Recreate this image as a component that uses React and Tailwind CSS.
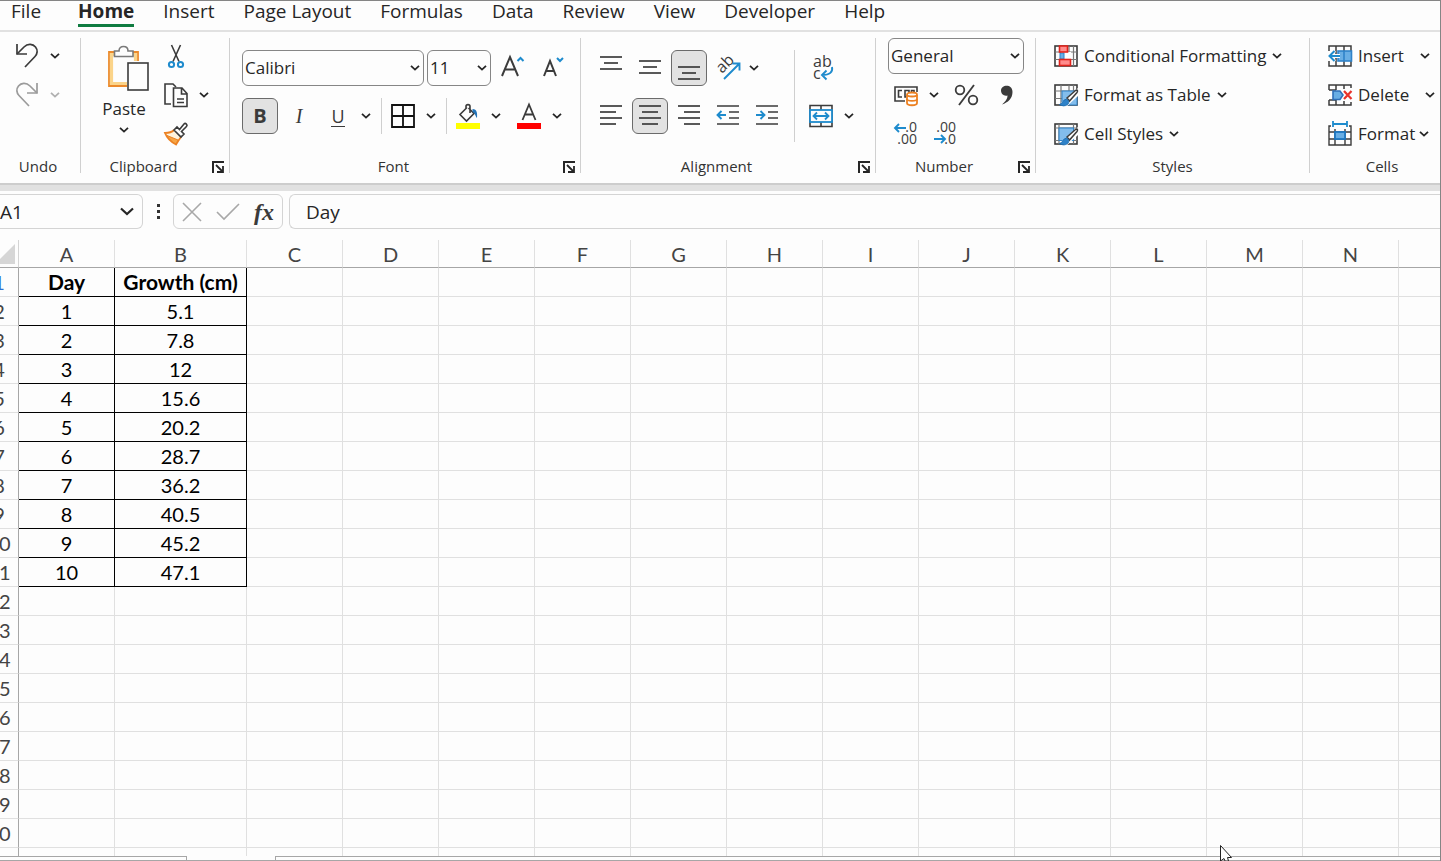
import React, { useState } from 'react';

const TABS = ['File', 'Home', 'Insert', 'Page Layout', 'Formulas', 'Data', 'Review', 'View', 'Developer', 'Help'];
const COLUMNS = ['A', 'B', 'C', 'D', 'E', 'F', 'G', 'H', 'I', 'J', 'K', 'L', 'M', 'N'];
const ROWS = Array.from({ length: 20 }, (_, i) => i + 1);

const DATA = [
    ['Day', 'Growth (cm)'],
    ['1', '5.1'],
    ['2', '7.8'],
    ['3', '12'],
    ['4', '15.6'],
    ['5', '20.2'],
    ['6', '28.7'],
    ['7', '36.2'],
    ['8', '40.5'],
    ['9', '45.2'],
    ['10', '47.1'],
];

const Icon = ({ w = 24, h = 24, children, className = '' }) => (
    <svg width={w} height={h} viewBox={`0 0 ${w} ${h}`} fill="none" stroke="#3b3b3b" strokeWidth="1.6" className={`shrink-0 overflow-visible ${className}`} aria-hidden="true">
        {children}
    </svg>
);

const Chevron = ({ className = 'text-[#262626]' }) => (
    <svg width="10" height="6" viewBox="0 0 10 6" fill="none" stroke="currentColor" strokeWidth="1.8" className={`shrink-0 ${className}`} aria-hidden="true">
        <path d="M1 .8 L5 4.6 L9 .8" />
    </svg>
);

const MenuButton = ({ label, className = 'w-5', tone }) => (
    <button type="button" aria-label={label} className={`flex h-9 shrink-0 items-center justify-center ${className}`}>
        <Chevron className={tone} />
    </button>
);

const ToolButton = ({ label, active, children }) => (
    <button
        type="button"
        aria-label={label}
        aria-pressed={active}
        className={`flex h-9 w-9 shrink-0 items-center justify-center rounded-md border ${active ? 'border-[#6b6b6b] bg-[#e2e2e2]' : 'border-transparent'}`}
    >
        {children}
    </button>
);

const Divider = () => <div className="h-9 w-px shrink-0 bg-[#cfcfcf]" />;

const Group = ({ name, width, launcher, children, last, labelClass = '' }) => (
    <section aria-label={name} className={`flex h-[135px] flex-col ${last ? '' : 'border-r border-[#d0d0d0]'} ${width}`}>
        <div className="h-[120px] shrink-0">{children}</div>
        <div className="flex h-[15px] items-center">
            <span className={`flex-1 text-center text-[15px] leading-4 text-[#333] ${labelClass}`}>{name}</span>
            {launcher && (
                <button type="button" aria-label={`${name} settings`} className="flex w-[23px] items-center justify-center pt-0.5">
                    <Icon w={12} h={12}>
                        <path d="M1 12 V1 H12" strokeWidth="2" stroke="#262626" />
                        <path d="M4 4 L10 10 M11 5 V11 H5" strokeWidth="1.8" stroke="#262626" />
                    </Icon>
                </button>
            )}
        </div>
    </section>
);

const Dropdown = ({ label, options, className }) => (
    <div className={`relative h-9 shrink-0 ${className}`}>
        <select aria-label={label} className="h-full w-full appearance-none rounded-md border border-[#868686] bg-[#fdfdfd] pl-0.5 text-[17px] leading-6 text-[#262626]">
            {options.map((option) => (
                <option key={option}>{option}</option>
            ))}
        </select>
        <Chevron className="pointer-events-none absolute right-1 top-[15px] text-[#262626]" />
    </div>
);

const Lines = ({ rows }) => (
    <Icon w={34} h={34}>
        {rows.map(([x1, x2, y]) => (
            <path key={y} d={`M${x1} ${y} H${x2}`} strokeWidth="1.7" />
        ))}
    </Icon>
);

const UndoIcon = ({ flip, color }) => (
    <Icon w={24} h={26} className={flip ? '-scale-x-100' : ''}>
        <g stroke={color} strokeWidth="1.7">
            <path d="M2 1 V11 H12" />
            <path d="M2 11 L9 4 C13 0 18 1 20.500 4 C23 7 22.500 11 20 13.500 L10 24" />
        </g>
    </Icon>
);

const PasteIcon = () => (
    <Icon w={42} h={46} className="ml-2">
        <path d="M9 7 H2 V41 H20 M25 7 H31 V16" stroke="#ec8a2b" strokeWidth="1.800" />
        <path d="M9 9.500 H4.500 V38.500 H20 M25 9.500 H28.500 V16" stroke="#fbd48a" strokeWidth="3.200" />
        <path d="M7.500 11.500 V6 H12 C12 3 14 1.500 16.500 1.500 C19 1.500 21 3 21 6 H26 V11.500 Z" stroke="#7a7a7a" fill="#fdfdfd" />
        <rect x="21" y="18" width="20" height="27" fill="#fdfdfd" />
    </Icon>
);

const CutIcon = () => (
    <Icon w={24} h={26}>
        <path d="M7.500 2 L15 18.500 M16.500 2 L9 18.500" />
        <circle cx="7.500" cy="21.500" r="2.600" stroke="#1e8bcd" strokeWidth="2" />
        <circle cx="16.500" cy="21.500" r="2.600" stroke="#1e8bcd" strokeWidth="2" />
    </Icon>
);

const CopyIcon = () => (
    <Icon w={24} h={26}>
        <path d="M7 22 H1 V2 H9 L12 5" />
        <path d="M9.500 6 H18 L23 11.500 V24.500 H9.500 Z M17.500 6 V12 H23" fill="#fdfdfd" />
        <path d="M13 17 H20 M13 20.500 H20" strokeWidth="1.400" />
    </Icon>
);

const PainterIcon = () => (
    <Icon w={24} h={24}>
        <path d="M10 8 C7 11 4 11 1 11 C3 16 7 20 12 22.500 C14 19 15.500 17 17 15" stroke="#ec8122" strokeWidth="1.800" fill="#fff3dc" />
        <path d="M3 13.500 L14 18 L12 22 C8 20 5 17 3 13.500 Z" fill="#f6a545" stroke="#ec8122" strokeWidth="1" />
        <path d="M10 8 L13 5 L15.500 7.500 L20 2 C21.500 .5 24 3 22.500 4.500 L17.500 9.500 L20 12 L17 15 Z" fill="#fdfdfd" />
    </Icon>
);

const GridBase = () => (
    <>
        <rect x="1" y="2" width="22" height="20" />
        <path d="M1 8 H23 M1 15.500 H23 M7 2 V22 M15 2 V22 M19.500 2 V22" stroke="#777" strokeWidth="1.200" />
    </>
);

const Brush = () => (
    <>
        <path d="M24 5 L7 20 L12 24 L24 13 Z" fill="#fdfdfd" stroke="none" />
        <path d="M13 15 L21.500 7.500 C23.500 6 24 8 23 9.500 L15.500 18 Z" fill="#fdfdfd" strokeWidth="1.500" />
        <path d="M5.500 21.500 C9 21 8.500 16.500 12.500 16 C15 17.500 15.500 20 13.500 21.500 C11 23.500 8 23 5.500 21.500 Z" fill="#2f82c8" stroke="#1c6fb5" strokeWidth="1" />
    </>
);

const ConditionalIcon = () => (
    <Icon>
        <GridBase />
        <rect x="7" y="8" width="10" height="7" fill="#fdfdfd" stroke="none" />
        <rect x="6" y="9" width="4" height="6" fill="#69aee4" stroke="#2f82c8" strokeWidth="1" />
        <rect x="5.500" y="2" width="8" height="6" fill="#ff8c8c" stroke="#e0231c" />
        <rect x="5.500" y="15.500" width="11" height="6" fill="#ff8c8c" stroke="#e0231c" />
    </Icon>
);

const TableIcon = () => (
    <Icon>
        <GridBase />
        <rect x="8" y="8" width="15" height="14" fill="#83bdec" stroke="#2f82c8" strokeWidth="1" />
        <Brush />
    </Icon>
);

const CellStyleIcon = () => (
    <Icon>
        <rect x="1" y="2" width="22" height="20" />
        <path d="M1 6 H23 M1 18.500 H23 M5 2 V22 M19.500 2 V22" stroke="#777" strokeWidth="1.200" />
        <rect x="5" y="6" width="14.500" height="12.500" fill="#83bdec" stroke="#2f82c8" strokeWidth="1" />
        <Brush />
    </Icon>
);

const InsertIcon = () => (
    <Icon>
        <path d="M1 7 V2 H23 V22 H1 V17 M8 2 V22 M16 2 V22" strokeWidth="1.500" />
        <rect x="10" y="7" width="13.500" height="10" fill="#69aee4" stroke="#2f82c8" />
        <path d="M16 7 V17" stroke="#2f82c8" />
        <path d="M12 12 H1.500 M6.500 6.500 L1.500 12 L6.500 17.500" stroke="#fdfdfd" strokeWidth="4" />
        <path d="M12 12 H1.500 M6.500 7 L1.500 12 L6.500 17" stroke="#1e8bcd" strokeWidth="2" />
    </Icon>
);

const DeleteIcon = () => (
    <Icon>
        <path d="M1 7 V2 H23 V5 M1 17 V22 H23 V19 M8 2 V7 M8 17 V22 M16 2 V6 M16 18 V22 M1 7 H8 M1 17 H8" strokeWidth="1.500" />
        <path d="M5 8 H12 L15 12 L12 16.500 H5 Z" fill="#69aee4" stroke="#2f6fb8" />
        <path d="M16 8 L23.500 16 M23.500 8 L16 16" stroke="#e8322b" strokeWidth="2.200" />
    </Icon>
);

const FormatIcon = () => (
    <Icon w={24} h={26}>
        <path d="M3 5 H1 V24 H23 V5 H21 M1 11 H23 M1 18 H23 M7 8 V24 M17 8 V24" strokeWidth="1.400" />
        <rect x="7" y="11" width="10" height="7" fill="#69aee4" stroke="#1e78c2" strokeWidth="1.800" />
        <path d="M5 3 H19 M5 0 V6 M19 0 V6" stroke="#1e8bcd" strokeWidth="1.800" />
    </Icon>
);

const CommandRow = ({ icon, label, gap = 'gap-1.5' }) => (
    <button type="button" className={`flex h-9 items-center text-[17px] leading-6 whitespace-nowrap text-[#262626] ${gap}`}>
        <span className="flex items-center gap-1.5">
            {icon}
            {label}
        </span>
        <Chevron />
    </button>
);

const Ribbon = () => (
    <div className="flex overflow-hidden pb-2.5 pt-1.5">
        <Group name="Undo" width="w-[81px] shrink-0" labelClass="pr-1">
            <div className="flex h-full flex-col gap-[3px] pl-[9px]">
                <div className="flex">
                    <ToolButton label="Undo"><UndoIcon color="#3b3b3b" /></ToolButton>
                    <MenuButton label="Undo history" />
                </div>
                <div className="flex">
                    <ToolButton label="Redo"><UndoIcon flip color="#9b9b9b" /></ToolButton>
                    <MenuButton label="Redo history" tone="text-[#b0b0b0]" />
                </div>
            </div>
        </Group>

        <Group name="Clipboard" width="w-[149px] shrink-0" launcher>
            <div className="flex pl-3">
                <button type="button" className="flex w-[62px] shrink-0 flex-col items-center pt-[7px] text-[17px] leading-5 text-[#262626]">
                    <PasteIcon />
                    <span className="mt-2">Paste</span>
                    <Chevron className="mt-2 text-[#262626]" />
                </button>
                <div className="ml-[3px] flex flex-col gap-[3px]">
                    <ToolButton label="Cut"><CutIcon /></ToolButton>
                    <div className="flex">
                        <ToolButton label="Copy"><CopyIcon /></ToolButton>
                        <MenuButton label="Copy options" />
                    </div>
                    <ToolButton label="Format Painter"><PainterIcon /></ToolButton>
                </div>
            </div>
        </Group>

        <Group name="Font" width="w-[351px] shrink-0" launcher>
            <div className="flex flex-col gap-3 pl-3 pt-3">
                <div className="flex items-center">
                    <Dropdown label="Font" options={['Calibri', 'Arial']} className="w-[182px]" />
                    <Dropdown label="Font size" options={['11', '12']} className="ml-[3px] w-16" />
                    <button type="button" aria-label="Increase font size" className="ml-0.5 flex h-9 w-10 items-center justify-center">
                        <Icon w={26} h={26}>
                            <path d="M2 21 L10 2 L18 21 M5 14.500 H15" strokeWidth="2" />
                            <path d="M17.500 6 L20.500 3 L23.500 6" stroke="#1e8bcd" strokeWidth="2" />
                        </Icon>
                    </button>
                    <button type="button" aria-label="Decrease font size" className="flex h-9 w-10 items-center justify-center">
                        <Icon w={26} h={26}>
                            <path d="M4 21 L10 6 L16 21 M6 16 H14" strokeWidth="2" />
                            <path d="M17 3 L20 6 L23 3" stroke="#1e8bcd" strokeWidth="2" />
                        </Icon>
                    </button>
                </div>
                <div className="flex items-center">
                    <div className="flex gap-[3px]">
                        <ToolButton label="Bold" active><span className="text-xl leading-6 font-bold text-[#3b3b3b]">B</span></ToolButton>
                        <ToolButton label="Italic"><span className="font-['Liberation_Serif',serif] text-xl italic text-[#3b3b3b]">I</span></ToolButton>
                        <ToolButton label="Underline">
                            <span className="border-b border-[#3b3b3b] text-lg leading-5 text-[#3b3b3b]">U</span>
                        </ToolButton>
                    </div>
                    <MenuButton label="Underline style" />
                    <div className="ml-[5px] flex items-center gap-[3px]">
                        <Divider />
                        <ToolButton label="Borders">
                            <Icon><path d="M1 1 H23 V23 H1 Z M12 1 V23 M1 12 H23" stroke="#111" strokeWidth="1.800" /></Icon>
                        </ToolButton>
                    </div>
                    <MenuButton label="Border style" />
                    <div className="ml-[5px] flex items-center gap-[3px]">
                        <Divider />
                        <ToolButton label="Fill color">
                            <Icon w={24} h={26}>
                                <path d="M11 4.500 L4 11.500 L10.500 18 L18 10.500 L12.500 5 M10 6 V3.500 C10 1 14 1 14 3.500 V10" />
                                <path d="M16.500 6 C21 6 21.500 10 21 15 C19 13 19.500 10 16.500 9 Z" fill="#2474b8" stroke="none" />
                                <rect y="20" width="24" height="6" fill="#ffff00" stroke="none" />
                            </Icon>
                        </ToolButton>
                    </div>
                    <MenuButton label="Fill color options" />
                    <div className="ml-[5px]">
                        <ToolButton label="Font color">
                            <Icon w={24} h={26}>
                                <path d="M5.500 17 L12 1.500 L18.500 17 M8 11.500 H16" strokeWidth="1.800" />
                                <rect y="20" width="24" height="6" fill="#ff0000" stroke="none" />
                            </Icon>
                        </ToolButton>
                    </div>
                    <MenuButton label="Font color options" />
                </div>
            </div>
        </Group>

        <Group name="Alignment" width="w-[295px] shrink-0" launcher>
            <div className="flex pl-3 pt-3">
                <div className="flex w-[192px] flex-col gap-3">
                    <div className="flex gap-[3px]">
                        <ToolButton label="Top align"><Lines rows={[[6, 28, 6], [10, 24, 12], [6, 28, 18]]} /></ToolButton>
                        <ToolButton label="Middle align"><Lines rows={[[6, 28, 10], [10, 24, 16], [6, 28, 22]]} /></ToolButton>
                        <ToolButton label="Bottom align" active><Lines rows={[[6, 28, 16], [10, 24, 22], [6, 28, 28]]} /></ToolButton>
                        <div className="flex">
                            <ToolButton label="Orientation">
                                <Icon w={26} h={26}>
                                    <text x="0" y="0" transform="translate(7 19) rotate(-45)" fontSize="16" fill="#3b3b3b" stroke="none">ab</text>
                                    <path d="M9 24 L24 9 M17.500 8.500 H24.500 V15.500" stroke="#1e8bcd" strokeWidth="1.900" />
                                </Icon>
                            </ToolButton>
                            <MenuButton label="Orientation options" className="w-4" />
                        </div>
                    </div>
                    <div className="flex gap-[3px]">
                        <ToolButton label="Align left"><Lines rows={[[6, 28, 7], [6, 22, 13], [6, 28, 19], [6, 22, 25]]} /></ToolButton>
                        <ToolButton label="Center" active><Lines rows={[[6, 28, 7], [9, 25, 13], [6, 28, 19], [9, 25, 25]]} /></ToolButton>
                        <ToolButton label="Align right"><Lines rows={[[6, 28, 7], [12, 28, 13], [6, 28, 19], [12, 28, 25]]} /></ToolButton>
                        <ToolButton label="Decrease indent">
                            <Icon w={34} h={34}>
                                <path d="M6 7 H28 M18 13 H28 M18 19 H28 M6 25 H28" />
                                <path d="M15 16 H7 M10.500 12 L6.500 16 L10.500 20" stroke="#1e8bcd" strokeWidth="1.900" />
                            </Icon>
                        </ToolButton>
                        <ToolButton label="Increase indent">
                            <Icon w={34} h={34}>
                                <path d="M6 7 H28 M18 13 H28 M18 19 H28 M6 25 H28" />
                                <path d="M6 16 H14 M10.500 12 L14.500 16 L10.500 20" stroke="#1e8bcd" strokeWidth="1.900" />
                            </Icon>
                        </ToolButton>
                    </div>
                </div>
                <div className="ml-[9px] h-[92px] w-px bg-[#cfcfcf]" />
                <div className="ml-2 flex flex-col gap-3">
                    <ToolButton label="Wrap text">
                        <Icon w={26} h={26}>
                            <text x="5" y="12" fontSize="16" fill="#3b3b3b" stroke="none">ab</text>
                            <text x="5" y="24" fontSize="16" fill="#3b3b3b" stroke="none">c</text>
                            <path d="M24 12 C25 17 22 20 14 20 M18.500 15.500 L14 20 L18.500 24.500" stroke="#1e8bcd" strokeWidth="1.900" />
                        </Icon>
                    </ToolButton>
                    <div className="flex">
                        <ToolButton label="Merge and center">
                            <Icon>
                                <path d="M1 1.500 H23 V22.500 H1 Z M12 1.500 V22.500" />
                                <rect x="1" y="6" width="22" height="12" fill="#fdfdfd" stroke="#1e8bcd" strokeWidth="1.800" />
                                <path d="M4.500 12 H19.500 M8 8.500 L4.500 12 L8 15.500 M16 8.500 L19.500 12 L16 15.500" stroke="#1e8bcd" strokeWidth="1.800" />
                            </Icon>
                        </ToolButton>
                        <MenuButton label="Merge options" />
                    </div>
                </div>
            </div>
        </Group>

        <Group name="Number" width="w-[160px] shrink-0" launcher>
            <div className="flex flex-col gap-[3px] pl-3">
                <Dropdown label="Number format" options={['General', 'Number', 'Currency']} className="w-[136px]" />
                <div className="flex gap-1">
                    <div className="flex">
                        <ToolButton label="Accounting format">
                            <Icon w={24} h={22}>
                                <path d="M11 17 H1 V3 H23 V8" />
                                <path d="M8 6.500 H4.500 V13 H8 M15 9 V6.500 H11 V13 H12 M17.500 8 V6.500 H20 V8" />
                                <path d="M13 11 V19 C13 22 23 22 23 19 V11" fill="#fff" stroke="#ec8122" strokeWidth="1.800" />
                                <ellipse cx="18" cy="10.500" rx="5" ry="2" fill="#fff" stroke="#ec8122" strokeWidth="1.800" />
                                <path d="M13 15 C13 17.500 23 17.500 23 15" stroke="#ec8122" strokeWidth="1.800" />
                            </Icon>
                        </ToolButton>
                        <MenuButton label="Accounting options" />
                    </div>
                    <ToolButton label="Percent style">
                        <Icon>
                            <circle cx="6" cy="7" r="4.300" strokeWidth="1.800" />
                            <circle cx="19" cy="17" r="4.300" strokeWidth="1.800" />
                            <path d="M20 2 L5 22" strokeWidth="1.800" />
                        </Icon>
                    </ToolButton>
                    <ToolButton label="Comma style">
                        <Icon>
                            <path d="M7 7.500 C7 1.500 18.500 .5 18.500 9 C18.500 15.500 14 19.500 8 21.500 C12 18 13.500 15.500 13.500 12.500 C10 13.500 7 11 7 7.500 Z" fill="#3b3b3b" stroke="none" />
                        </Icon>
                    </ToolButton>
                </div>
                <div className="flex gap-[3px]">
                    <ToolButton label="Increase decimal">
                        <Icon w={26} h={26}>
                            <text x="24" y="11" textAnchor="end" fontSize="14" fill="#3b3b3b" stroke="none">.0</text>
                            <text x="24" y="23" textAnchor="end" fontSize="14" fill="#3b3b3b" stroke="none">.00</text>
                            <path d="M13 7 H2 M6 3 L2 7 L6 11" stroke="#1e8bcd" strokeWidth="1.900" />
                        </Icon>
                    </ToolButton>
                    <ToolButton label="Decrease decimal">
                        <Icon w={26} h={26}>
                            <text x="24" y="11" textAnchor="end" fontSize="14" fill="#3b3b3b" stroke="none">.00</text>
                            <text x="24" y="23" textAnchor="end" fontSize="14" fill="#3b3b3b" stroke="none">.0</text>
                            <path d="M2 18 H13 M9 14 L13 18 L9 22" stroke="#1e8bcd" strokeWidth="1.900" />
                        </Icon>
                    </ToolButton>
                </div>
            </div>
        </Group>

        <Group name="Styles" width="w-[274px] shrink-0">
            <div className="flex flex-col items-start gap-[3px] pl-[18px]">
                <CommandRow icon={<ConditionalIcon />} label="Conditional Formatting" />
                <CommandRow icon={<TableIcon />} label="Format as Table" />
                <CommandRow icon={<CellStyleIcon />} label="Cell Styles" />
            </div>
        </Group>

        <Group name="Cells" width="min-w-[130px] flex-1" last labelClass="pl-3.5">
            <div className="flex flex-col items-start gap-[3px] pl-[18px]">
                <CommandRow icon={<InsertIcon />} label="Insert" gap="gap-4" />
                <CommandRow icon={<DeleteIcon />} label="Delete" gap="gap-4" />
                <CommandRow icon={<FormatIcon />} label="Format" gap="gap-1" />
            </div>
        </Group>
    </div>
);

const FormulaBar = ({ value, onChange }) => (
    <div className="flex h-[49px] shrink-0 items-start pt-[3px]">
        <div className="flex h-[35px] w-[143px] shrink-0 items-center justify-between overflow-hidden rounded-r-md border border-l-0 border-[#d4d4d4] pr-2">
            <input aria-label="Name box" defaultValue="A1" className="w-20 bg-transparent text-[19px] leading-6 text-[#262626] outline-none" />
            <button type="button" aria-label="Named ranges">
                <svg width="14" height="9" viewBox="0 0 14 9" fill="none" stroke="#262626" strokeWidth="2.200"><path d="M1 1.500 L7 7 L13 1.500" /></svg>
            </button>
        </div>
        <div className="flex h-[35px] w-[30px] shrink-0 flex-col items-center justify-center gap-[3px]">
            <span className="h-[3px] w-[3px] bg-[#333]" />
            <span className="h-[3px] w-[3px] bg-[#333]" />
            <span className="h-[3px] w-[3px] bg-[#333]" />
        </div>
        <div className="flex h-[35px] w-[110px] shrink-0 items-center justify-between rounded-md border border-[#d4d4d4] px-2">
            <button type="button" aria-label="Cancel">
                <Icon w={20} h={20}><path d="M1 1 L19 19 M19 1 L1 19" stroke="#a8a8a8" /></Icon>
            </button>
            <button type="button" aria-label="Enter">
                <Icon w={24} h={18}><path d="M1 9 L8 16 L23 1" stroke="#a8a8a8" /></Icon>
            </button>
            <button type="button" className="font-['Liberation_Serif',serif] text-2xl font-bold italic leading-7 text-[#3b3b3b]">fx</button>
        </div>
        <input
            aria-label="Formula bar"
            value={value}
            onChange={(e) => onChange(e.target.value)}
            className="ml-1.5 h-[35px] min-w-0 flex-1 rounded-l-md border border-r-0 border-[#d4d4d4] bg-transparent pl-4 text-[19px] leading-6 text-[#262626] outline-none"
        />
    </div>
);

const Sheet = () => (
    <div className="min-h-0 flex-1 overflow-hidden font-[Lato,sans-serif]">
        <table className="w-full table-fixed border-separate border-spacing-0 text-xl leading-6">
            <colgroup>
                <col className="w-[19px]" />
                {COLUMNS.map((col) => (
                    <col key={col} className={col === 'B' ? 'w-[132px]' : 'w-24'} />
                ))}
                <col />
            </colgroup>
            <thead>
                <tr className="h-7">
                    <th className="border-b border-r border-[#a6a6a6] border-r-[#d4d4d4] p-0">
                        <svg width="15" height="20" viewBox="0 0 15 20" aria-hidden="true"><path d="M15 0 V20 H0 V15 Z" fill="#d6d6d6" /></svg>
                    </th>
                    {COLUMNS.map((col) => (
                        <th key={col} scope="col" className="border-b border-r border-[#a6a6a6] border-r-[#e0e0e0] p-0 font-normal text-[#444]">{col}</th>
                    ))}
                    <th className="border-b border-[#a6a6a6] p-0" />
                </tr>
            </thead>
            <tbody>
                {ROWS.map((row) => {
                    const filled = DATA[row - 1];
                    return (
                        <tr key={row} className="h-[29px]">
                            <th scope="row" className="overflow-hidden border-b border-r border-[#e0e0e0] border-r-[#a6a6a6] p-0 font-normal">
                                <div className={`-ml-5 w-[38px] text-center ${row === 1 ? 'text-[#2f6fd0]' : 'text-[#444]'}`}>{row}</div>
                            </th>
                            {COLUMNS.map((col, i) => (
                                <td
                                    key={col}
                                    className={`border-b border-r p-0 text-center text-black ${filled && i < 2 ? 'border-black' : 'border-[#e0e0e0]'} ${row === 1 ? 'text-[21px] font-bold' : ''}`}
                                >
                                    {filled && filled[i]}
                                </td>
                            ))}
                            <td className="border-b border-[#e0e0e0] p-0" />
                        </tr>
                    );
                })}
                <tr className="h-[29px]">
                    <th className="border-r border-[#a6a6a6] p-0" />
                    {COLUMNS.map((col) => (
                        <td key={col} className="border-r border-[#e0e0e0] p-0" />
                    ))}
                    <td className="p-0" />
                </tr>
            </tbody>
        </table>
    </div>
);

const App = () => {
    const [activeTab, setActiveTab] = useState('Home');
    const [formula, setFormula] = useState('Day');

    return (
        <div className="relative flex h-screen flex-col overflow-hidden border-r border-t border-[#858585] bg-[#fdfdfd] font-['Open_Sans',sans-serif] text-[#262626]">
            <nav className="flex h-[31px] shrink-0 items-start gap-[29px] border-b-2 border-[#e1e1e1] pl-[11px]">
                {TABS.map((tab) => (
                    <button
                        key={tab}
                        type="button"
                        onClick={() => setActiveTab(tab)}
                        className={`h-[26px] whitespace-nowrap border-b-[3px] pb-1 text-[19px] leading-5 first:mr-2 ${tab === activeTab ? 'border-[#107c41] font-bold' : 'border-transparent'}`}
                    >
                        {tab}
                    </button>
                ))}
            </nav>

            <Ribbon />
            <div className="h-2 shrink-0 border-t-2 border-[#cdcdcd] bg-[#e1e1e1]" />
            <FormulaBar value={formula} onChange={setFormula} />
            <Sheet />

            <div className="flex h-[5px] shrink-0 border-b border-[#a6a6a6]">
                <div className="w-[187px] border-r border-t border-[#a6a6a6]" />
                <div className="w-[88px]" />
                <div className="flex-1 border-l border-t border-[#a6a6a6]" />
            </div>

            <svg className="absolute bottom-0 left-[1220px]" width="13" height="16" viewBox="0 0 13 16" aria-hidden="true">
                <path d="M.5 .5 V16 L4 13.500 L5 16 H8.500 L7.500 12.500 H11.500 Z" fill="#fff" stroke="#222" />
            </svg>
        </div>
    );
};

export default App;
